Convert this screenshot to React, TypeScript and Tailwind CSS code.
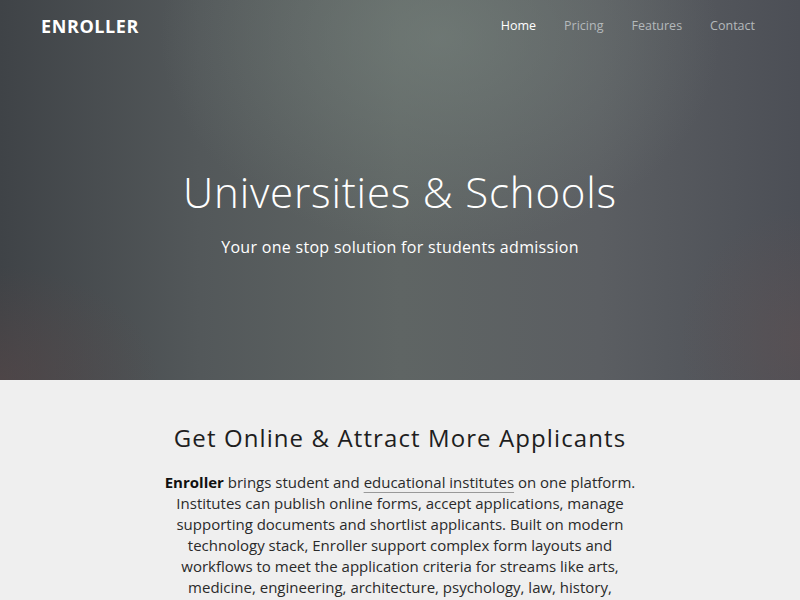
import React from 'react';

const links = ['Home', 'Pricing', 'Features', 'Contact'];

const App: React.FC = () => {
  return (
    <div className="min-h-screen bg-[#efefef] font-['Open_Sans',sans-serif]">
      {/* Hero */}
      <header className="relative h-[380px] overflow-hidden bg-[linear-gradient(to_right,#3f4347_0%,#53585a_25%,#5f6564_50%,#5b5e62_75%,#4c4f56_100%)] text-white">
        <div className="pointer-events-none absolute inset-0 bg-[radial-gradient(ellipse_35%_55%_at_55%_10%,rgba(120,132,126,0.6),transparent)]" />
        <div className="pointer-events-none absolute inset-0 bg-[radial-gradient(ellipse_20%_30%_at_0%_100%,rgba(95,72,72,0.45),transparent)]" />
        <div className="pointer-events-none absolute inset-0 bg-[radial-gradient(ellipse_15%_35%_at_100%_90%,rgba(100,82,82,0.45),transparent)]" />
        <nav className="relative flex items-center justify-between px-[41px] pt-[13px]">
          <span className="text-[18px] font-bold tracking-[0.6px]">ENROLLER</span>
          <ul className="flex gap-[28px] pr-[4px] text-[12.5px]">
            {links.map((l, i) => (
              <li key={l} className={i === 0 ? 'text-white' : 'text-[#b4b9bb]'}>
                {l}
              </li>
            ))}
          </ul>
        </nav>
        <div className="relative flex flex-col items-center pt-[131px]">
          <h1 className="text-[42px] font-light leading-none tracking-[0.8px]">Universities &amp; Schools</h1>
          <p className="mt-[22px] text-[16px] tracking-[0.3px]">Your one stop solution for students admission</p>
        </div>
      </header>

      {/* Intro */}
      <section className="flex flex-col items-center pt-[40px] text-[#1e1e1e]">
        <h2 className="text-[24px] tracking-[1.1px]">Get Online &amp; Attract More Applicants</h2>
        <p className="mt-[16px] w-[478px] text-center text-[15px] leading-[21px] text-[#2a2a2a]">
          <strong className="font-bold text-[#111]">Enroller</strong> brings student and{' '}
          <span className="underline decoration-[#999] underline-offset-[4px]">educational institutes</span> on one platform.
          Institutes can publish online forms, accept applications, manage supporting documents and shortlist applicants.
          Built on modern technology stack, Enroller support complex form layouts and workflows to meet the application
          criteria for streams like arts, medicine, engineering, architecture, psychology, law, history, commerce and
          more.
        </p>
      </section>
    </div>
  );
};

export default App;
